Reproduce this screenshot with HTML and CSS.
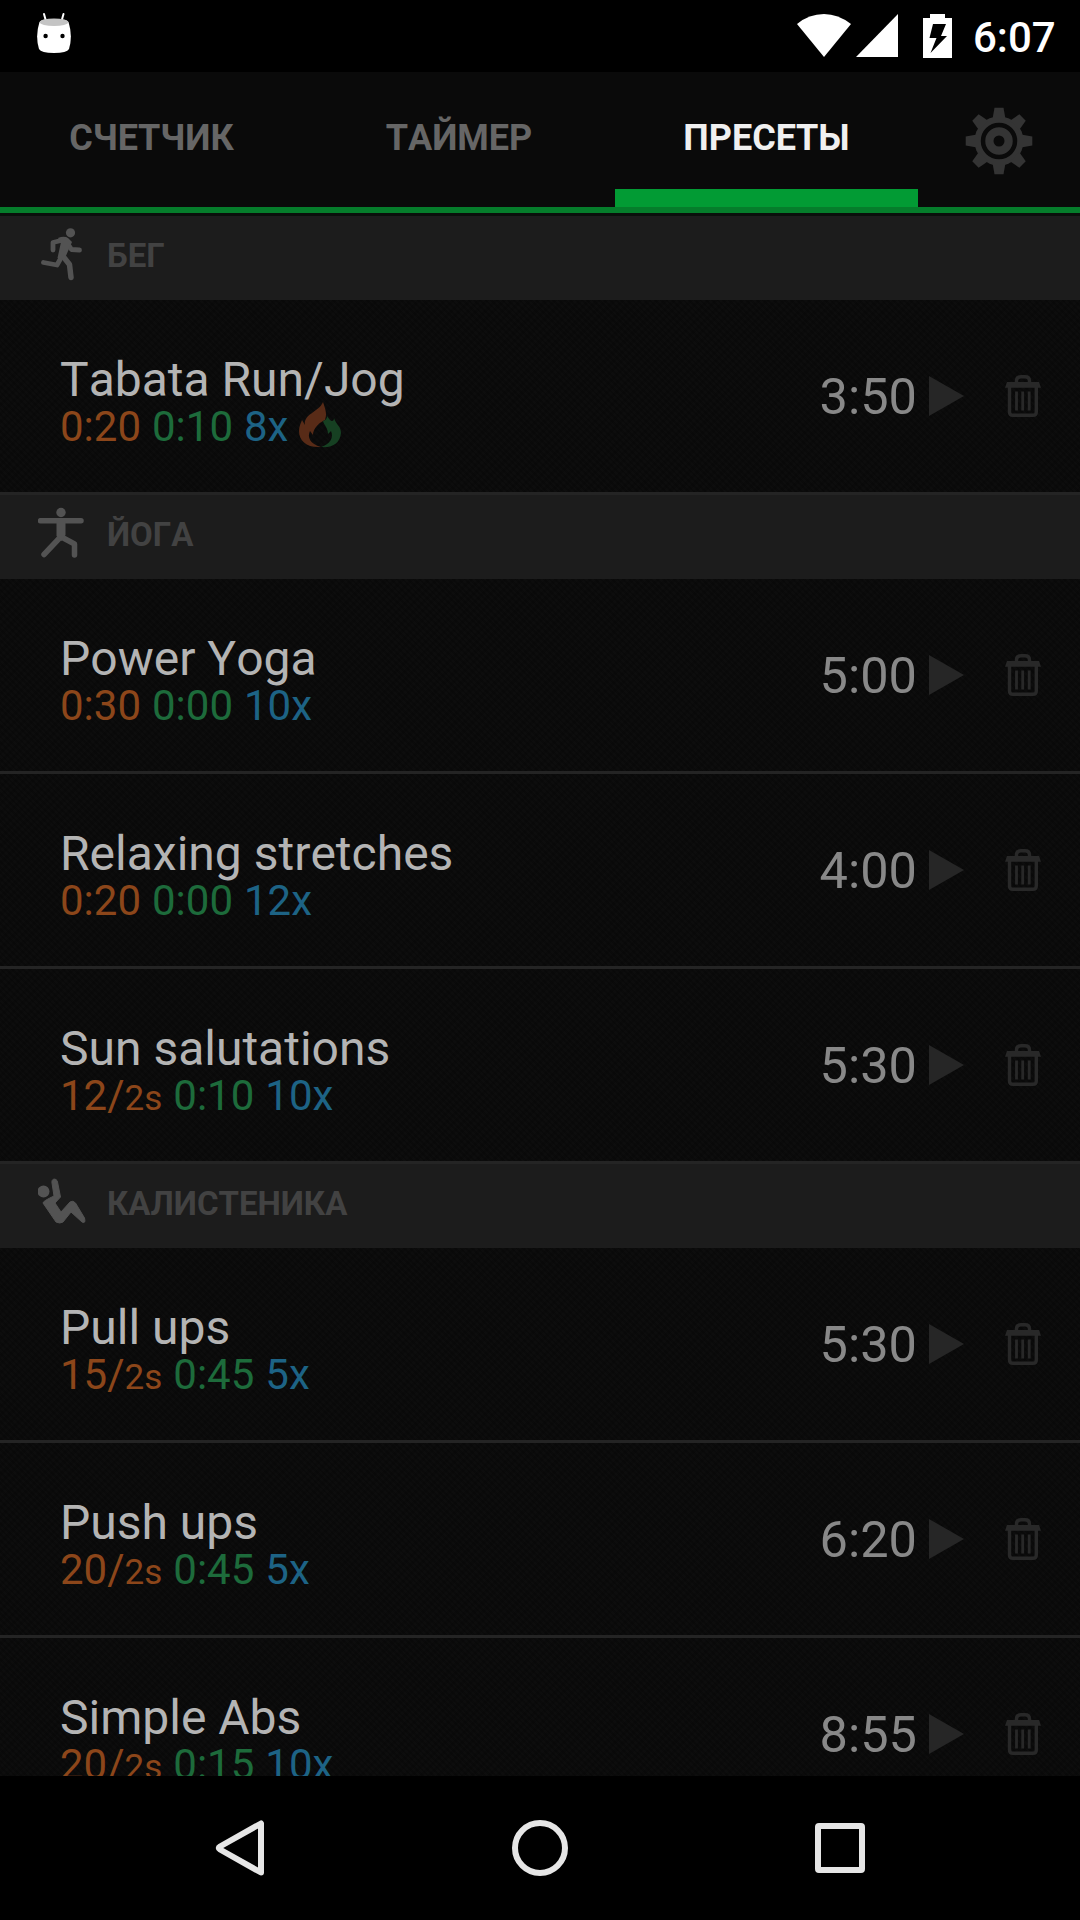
FILE: index.html
```
<!DOCTYPE html>
<html lang="ru">
<head>
<meta charset="utf-8">
<title>Пресеты</title>
<link rel="stylesheet" href="styles.css">
</head>
<body>
<svg class="defs" aria-hidden="true">
  <symbol id="play" viewBox="0 0 35 40"><path d="M0 0L35 20L0 40Z" fill="#262626"/></symbol>
  <symbol id="trash" viewBox="0 0 36 42"><g fill="none" stroke="#282828" stroke-width="3.4"><path d="M11.500 8V6Q11.500 1.800 16 1.800H20Q24.500 1.800 24.500 6V8"/><path d="M4.500 12V37Q4.500 40.300 8 40.300H28Q31.300 40.300 31.300 37V12"/><path d="M11.500 16.500V35.500M17.700 16.500V35.500M24.200 16.500V35.500" stroke-width="2.800"/></g><path d="M2 7H34L36 12.800H0Z" fill="#282828"/></symbol>
</svg>
<div class="screen">
  <header class="status">
    <svg class="robot" width="36" height="42" viewBox="0 0 36 42"><path d="M8 2L10.500 11M27.500 2L25 11" stroke="#fff" stroke-width="2" stroke-linecap="round"/><path d="M3.500 10Q5 7 18 7Q31 7 32.500 10Q37 24 33 37Q31 41 18 41Q5 41 3 37Q-1 24 3.500 10Z" fill="#fff"/><ellipse cx="18" cy="10.300" rx="14.200" ry="3.800" fill="#c4c4c4"/><circle cx="9.600" cy="24" r="2.200"/><circle cx="26.500" cy="24" r="2.200"/></svg>
    <div class="status-icons">
      <svg width="54" height="44" viewBox="0 0 54 44"><path d="M0 10Q12 0 27 0Q41 0 54 10L27 43Z" fill="#fff"/></svg>
      <svg width="42" height="44" viewBox="0 0 42 44"><path d="M42 0V43H0Z" fill="#fff"/></svg>
      <svg class="battery" width="29" height="44" viewBox="0 0 29 44"><path d="M7 0H22V4H29V44H0V4H7Z" fill="#fff"/><path d="M10 10H23L18 22H24L7.500 39L13.500 24H6.500Z" fill="#000"/></svg>
      <span class="clock">6:07</span>
    </div>
  </header>
  <nav class="tabs">
    <div class="tab"><span>СЧЕТЧИК</span></div>
    <div class="tab"><span>ТАЙМЕР</span></div>
    <div class="tab active"><span>ПРЕСЕТЫ</span></div>
    <svg class="gear" width="68" height="68" viewBox="-34 -34 68 68"><g fill="#343434"><circle r="24.500"/><path id="tooth" d="M-4.500 -33.300H4.500L6.500 -22H-6.500Z"/><use href="#tooth" transform="rotate(45)"/><use href="#tooth" transform="rotate(90)"/><use href="#tooth" transform="rotate(135)"/><use href="#tooth" transform="rotate(180)"/><use href="#tooth" transform="rotate(225)"/><use href="#tooth" transform="rotate(270)"/><use href="#tooth" transform="rotate(315)"/></g><circle r="16" fill="none" stroke="#0a0a0a" stroke-width="4.500"/><circle r="5.500" fill="#0a0a0a"/></svg>
  </nav>
  <main class="list">
    <section>
      <h2 class="group"><svg width="48" height="54" viewBox="0 0 48 54"><g fill="none" stroke="#535353" stroke-width="4.800" stroke-linecap="round" stroke-linejoin="round"><path d="M15 22V14.500L27 11.500L33.500 21.500L41.500 22"/><path d="M5.500 34.500L19 37L24 28"/><path d="M24 27L31.500 36.500L33 49.500" stroke-width="5.500"/></g><path d="M20 10Q26 7.500 30 10L34 14L27 30L19.500 30L23 14Z" fill="#535353"/><circle cx="32.500" cy="4.800" r="4.600" fill="#535353"/></svg><span>БЕГ</span></h2>
      <div class="row"><div class="info"><div class="name">Tabata Run/Jog</div><div class="sets"><span class="work">0:20</span> <span class="rest">0:10</span> <span class="reps">8x</span><svg class="flame" width="42" height="46" viewBox="0 0 42 46"><path d="M24 0C27 9 28 12 26 18C21 20 14 26 14 33L11 29C8 35 11 42 22 45C8 46 0 39 0 29C0 24 2 21 3 18L6 23C4 12 20 10 24 0Z" fill="#582b17"/><path d="M28 14L31 18C33 20 35 19 35 16C37 23 42 24 42 31C41 41 34 46 22 45C31 42 35 36 32 29L29 32C29 26 25 23 24 19Q28 18 28 14Z" fill="#164022"/></svg></div></div><div class="time">3:50</div><svg class="play"><use href="#play"/></svg><svg class="trash"><use href="#trash"/></svg></div>
    </section>
    <section>
      <h2 class="group"><svg width="48" height="54" viewBox="0 0 48 54"><g fill="none" stroke="#535353" stroke-width="5.500" stroke-linecap="round" stroke-linejoin="round"><path d="M2.500 13.800H43"/><path d="M22.500 30L6 47.500M23.500 30L36.500 37V48"/></g><path d="M18.500 14H27.500V28L23.500 34L18.500 29Z" fill="#535353"/><circle cx="23" cy="5.500" r="4.700" fill="#535353"/></svg><span>ЙОГА</span></h2>
      <div class="row"><div class="info"><div class="name">Power Yoga</div><div class="sets"><span class="work">0:30</span> <span class="rest">0:00</span> <span class="reps">10x</span></div></div><div class="time">5:00</div><svg class="play"><use href="#play"/></svg><svg class="trash"><use href="#trash"/></svg></div>
      <div class="row"><div class="info"><div class="name">Relaxing stretches</div><div class="sets"><span class="work">0:20</span> <span class="rest">0:00</span> <span class="reps">12x</span></div></div><div class="time">4:00</div><svg class="play"><use href="#play"/></svg><svg class="trash"><use href="#trash"/></svg></div>
      <div class="row"><div class="info"><div class="name">Sun salutations</div><div class="sets"><span class="work">12/<small>2s</small></span> <span class="rest">0:10</span> <span class="reps">10x</span></div></div><div class="time">5:30</div><svg class="play"><use href="#play"/></svg><svg class="trash"><use href="#trash"/></svg></div>
    </section>
    <section>
      <h2 class="group"><svg width="48" height="54" viewBox="0 0 48 54"><g fill="#535353" stroke="#535353" stroke-linejoin="round"><circle cx="5.500" cy="15.500" r="6" stroke="none"/><path d="M14 7C13 2 19 2 19.500 6L22.500 21L17 27L23 36L32 26Q35 24 37.500 27L46.500 42Q48 48 44 46L33 36L25 46Q22 48 18 46L5 27Q5 25 16 20Z" stroke-width="1"/></g></svg><span>КАЛИСТЕНИКА</span></h2>
      <div class="row"><div class="info"><div class="name">Pull ups</div><div class="sets"><span class="work">15/<small>2s</small></span> <span class="rest">0:45</span> <span class="reps">5x</span></div></div><div class="time">5:30</div><svg class="play"><use href="#play"/></svg><svg class="trash"><use href="#trash"/></svg></div>
      <div class="row"><div class="info"><div class="name">Push ups</div><div class="sets"><span class="work">20/<small>2s</small></span> <span class="rest">0:45</span> <span class="reps">5x</span></div></div><div class="time">6:20</div><svg class="play"><use href="#play"/></svg><svg class="trash"><use href="#trash"/></svg></div>
      <div class="row"><div class="info"><div class="name">Simple Abs</div><div class="sets"><span class="work">20/<small>2s</small></span> <span class="rest">0:15</span> <span class="reps">10x</span></div></div><div class="time">8:55</div><svg class="play"><use href="#play"/></svg><svg class="trash"><use href="#trash"/></svg></div>
    </section>
  </main>
  <footer class="navbar">
    <svg width="60" height="60" viewBox="0 0 60 60"><path d="M51 5.500V54.500L10 31.500Q7.500 30 10 28.500Z"/></svg>
    <svg width="60" height="60" viewBox="0 0 60 60"><circle cx="30" cy="30" r="25"/></svg>
    <svg width="60" height="60" viewBox="0 0 60 60"><rect x="8" y="8" width="44" height="44" rx="1"/></svg>
  </footer>
</div>
</body>
</html>
```
FILE: styles.css
```
* { box-sizing: border-box; }
body { margin: 0; background: #000; font-family: Roboto, sans-serif; font-kerning: none; }
svg { display: block; flex: none; }
.defs { width: 0; height: 0; position: absolute; }
.screen { width: 1080px; height: 1920px; display: flex; flex-direction: column; overflow: hidden; }

.status { height: 72px; flex: none; padding: 0 25px 0 36px; display: flex; justify-content: space-between; }
.robot { margin-top: 12px; }
.status-icons { display: flex; align-items: flex-start; gap: 5px; padding-top: 14px; }
.battery { margin-left: 20px; }
.clock { margin-left: 16px; width: 82px; color: #fff; font-size: 42px; font-weight: 500; line-height: 47px; white-space: nowrap; }

.tabs { height: 144px; flex: none; background: #0a0a0a; border-bottom: 3px solid #0a0f0b; box-shadow: inset 0 -6px #057d2b; display: flex; gap: 4.5px; }
.tab { width: 303px; height: 135px; text-align: center; font-size: 36px; font-weight: 700; line-height: 133px; color: #666; }
.tab.active { color: #f0f0f0; border-bottom: 18px solid #029b34; }
.gear { margin: 35px 0 0 42px; }

.list { flex: 1; min-height: 0; overflow: hidden; background-color: #0d0d0d;
  background-image: repeating-linear-gradient(45deg, transparent 0 2px, rgba(0,0,0,.2) 2px 4px), repeating-linear-gradient(-45deg, transparent 0 3px, rgba(0,0,0,.15) 3px 6px); }
section + section { border-top: 3px solid #242424; }
.group { margin: 0; height: 84px; padding: 12px 0 0 38px; background: rgba(32,32,32,.85); display: flex; align-items: flex-start; font-size: 33px; font-weight: 700; color: #424242; }
.group span { margin-left: 21px; line-height: 56px; }
.row { height: 192px; padding: 0 39px 0 60px; display: flex; }
.row + .row { height: 195px; border-top: 3px solid #242424; }
.info { flex: 1; padding-top: 55px; }
.name { font-size: 48px; line-height: 50px; color: #b4b4b4; }
.sets { display: flex; gap: 11px; font-size: 42px; line-height: 44px; height: 44px; }
.sets small { font-size: 35px; line-height: 1; }
.work { color: #8c461a; }
.rest { color: #1d6b3b; }
.reps { color: #1d6385; }
.flame { margin-top: -3px; }
.time { padding-top: 67px; font-size: 50.500px; line-height: 60px; color: #888; }
.play { width: 35px; height: 40px; margin: 76px 0 0 12px; }
.trash { width: 36px; height: 42px; margin: 75px 0 0 41px; }

.navbar { height: 144px; flex: none; background: #000; display: flex; justify-content: center; align-items: center; gap: 240px; }
.navbar svg { fill: none; stroke: #e6e6e6; stroke-width: 6; stroke-linejoin: round; }
```
